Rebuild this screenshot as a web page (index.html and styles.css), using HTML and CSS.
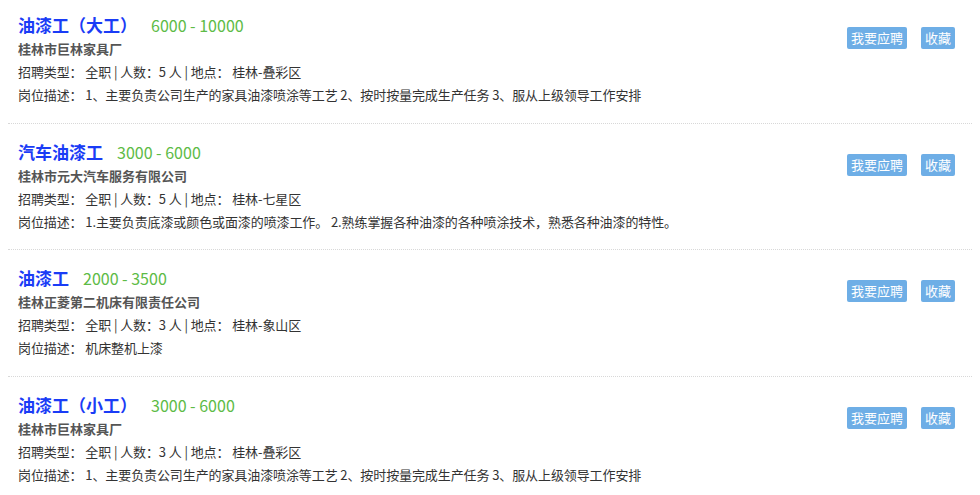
FILE: index.html
```html
<!DOCTYPE html>
<html lang="zh-CN">
<head>
<meta charset="utf-8">
<title>职位列表</title>
<link rel="stylesheet" href="styles.css">
</head>
<body>
<div class="job-list">
  <div class="job">
    <div class="job-main">
      <div class="job-head"><span class="job-title">油漆工（大工）</span><span class="salary">6000 - 10000</span></div>
      <div class="company">桂林市巨林家具厂</div>
      <div class="info">招聘类型： 全职 | 人数：5 人 | 地点： 桂林-叠彩区</div>
      <div class="info">岗位描述： 1、主要负责公司生产的家具油漆喷涂等工艺 2、按时按量完成生产任务 3、服从上级领导工作安排</div>
    </div>
    <div class="actions"><a class="btn">我要应聘</a><a class="btn">收藏</a></div>
  </div>
  <div class="job">
    <div class="job-main">
      <div class="job-head"><span class="job-title">汽车油漆工</span><span class="salary">3000 - 6000</span></div>
      <div class="company">桂林市元大汽车服务有限公司</div>
      <div class="info">招聘类型： 全职 | 人数：5 人 | 地点： 桂林-七星区</div>
      <div class="info">岗位描述： 1.主要负责底漆或颜色或面漆的喷漆工作。 2.熟练掌握各种油漆的各种喷涂技术，熟悉各种油漆的特性。</div>
    </div>
    <div class="actions"><a class="btn">我要应聘</a><a class="btn">收藏</a></div>
  </div>
  <div class="job">
    <div class="job-main">
      <div class="job-head"><span class="job-title">油漆工</span><span class="salary">2000 - 3500</span></div>
      <div class="company">桂林正菱第二机床有限责任公司</div>
      <div class="info">招聘类型： 全职 | 人数：3 人 | 地点： 桂林-象山区</div>
      <div class="info">岗位描述： 机床整机上漆</div>
    </div>
    <div class="actions"><a class="btn">我要应聘</a><a class="btn">收藏</a></div>
  </div>
  <div class="job">
    <div class="job-main">
      <div class="job-head"><span class="job-title">油漆工（小工）</span><span class="salary">3000 - 6000</span></div>
      <div class="company">桂林市巨林家具厂</div>
      <div class="info">招聘类型： 全职 | 人数：3 人 | 地点： 桂林-叠彩区</div>
      <div class="info">岗位描述： 1、主要负责公司生产的家具油漆喷涂等工艺 2、按时按量完成生产任务 3、服从上级领导工作安排</div>
    </div>
    <div class="actions"><a class="btn">我要应聘</a><a class="btn">收藏</a></div>
  </div>
</div>
</body>
</html>
```
FILE: styles.css
```css
html, body {
  margin: 0;
  padding: 0;
  background: #fff;
}
body {
  font-family: "Noto Sans CJK SC", "Noto Sans", sans-serif;
  color: #333;
  overflow: hidden;
}
.job-list {
  padding: 0 8px;
  width: 964px;
}
.job {
  display: flex;
  justify-content: space-between;
  align-items: flex-start;
  padding: 16px 0 16.5px 10px;
  border-bottom: 1px dotted #d8d8d8;
}
.job:first-child {
  padding-top: 13px;
}
.job:last-child {
  border-bottom: none;
}
.job-head {
  height: 24px;
  line-height: 24px;
  white-space: nowrap;
}
.job-title {
  font-size: 17px;
  font-weight: bold;
  color: #1a3cf6;
}
.salary {
  font-size: 16px;
  color: #5dbb46;
  margin-left: 14px;
}
.company {
  font-size: 13px;
  font-weight: bold;
  color: #555;
  line-height: 23px;
}
.info {
  font-size: 13px;
  color: #333;
  line-height: 23px;
  white-space: nowrap;
  letter-spacing: -0.1px;
}
.actions {
  display: flex;
  gap: 14px;
  margin-top: 14px;
  margin-right: 17px;
}
.btn {
  display: block;
  background: #6eaee6;
  color: #fff;
  font-size: 13px;
  line-height: 22px;
  height: 22px;
  padding: 0 4px;
  border-radius: 2px;
  cursor: pointer;
}
```
